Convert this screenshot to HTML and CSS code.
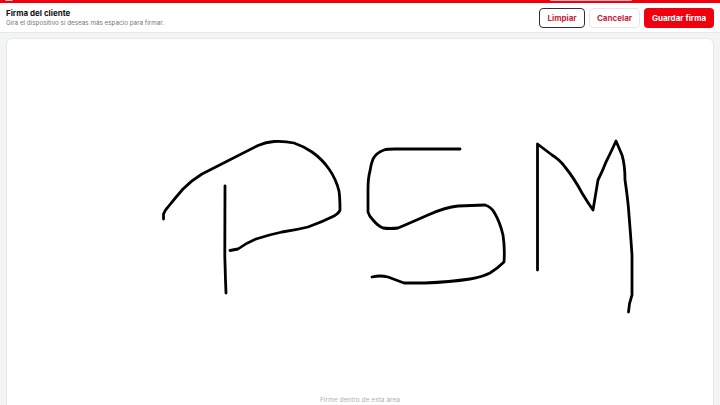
FILE: index.html
```html
<!DOCTYPE html>
<html lang="es">
<head>
  <meta charset="UTF-8">
  <meta name="viewport" content="width=device-width, initial-scale=1.0">
  <title>Firma del cliente</title>
  <link rel="stylesheet" href="styles.css">
</head>
<body>
  <div class="top-strip">
    <span class="strip-tab strip-tab-left"></span>
    <span class="strip-tab strip-tab-right"></span>
  </div>
  <header class="sign-header">
    <div class="sign-heading">
      <div class="sign-title">Firma del cliente</div>
      <div class="sign-hint">Gira el dispositivo si deseas más espacio para firmar.</div>
    </div>
    <div class="sign-actions">
      <button class="btn btn-clear">Limpiar</button>
      <button class="btn btn-cancel">Cancelar</button>
      <button class="btn btn-save">Guardar firma</button>
    </div>
  </header>
  <main class="sign-body">
    <div class="sign-pad">
      <svg class="sign-strokes" viewBox="0 0 708 367" aria-hidden="true">
        <g transform="translate(-6 -38)">
          <path d="M163.500 219 L163.500 214 Q165 210 168 207 Q176 197 183 189 Q192 180 202 174 L258 145.500 Q266 142 274 141.500 Q285 141 294 143 Q303 146 312 152 Q322 159 329 169 Q336 179 339 191 Q340 198 340 210 Q339 213 334 216 Q322 222 308 227 Q296 230 282 232 Q268 235 256 239 Q246 243 238 249 L230 250.500"/>
          <path d="M225 186 L224.800 256 L225.500 280 L226 293"/>
          <path d="M460 149 L395 149 Q387 149 384 150 Q376 153 373 159 Q371 164 370 171 Q368 178 368 190 L368 212 Q369 216 373 220 Q378 226 383 228 Q390 229 398 228 Q410 223 428 215 Q446 207 458 206 L485 205 Q491 207 494 212 Q500 222 503 235 Q505 248 504 262 Q498 268 490 273 Q482 277 470 279 Q450 282 425 283 L404 283 Q396 280 388 277 Q380 275 372 277"/>
          <path d="M537.500 270 L537.500 144 L552 155 Q560 160 565 167 Q574 178 582 193 Q588 203 593 210 L598 180 Q603 170 606 162 Q612 150 616 141 L622 155 Q625 165 625 180 Q628 200 629 215 Q631 240 632 255 L632 295 Q629 303 628.500 312"/>
        </g>
      </svg>
      <div class="sign-placeholder">Firme dentro de esta área</div>
    </div>
  </main>
</body>
</html>
```

FILE: styles.css
```css
html, body {
  height: 100%;
}

body {
  margin: 0;
  display: flex;
  flex-direction: column;
  height: 405px;
  overflow: hidden;
  background-color: #f3f4f6;
  color: #111;
  font-family: Inter, "Liberation Sans", sans-serif;
}

.top-strip {
  flex: 0 0 3px;
  display: flex;
  justify-content: space-between;
  align-items: flex-start;
  padding: 0 88px 0 5px;
  background-color: #f0000f;
}

.strip-tab {
  height: 1px;
  background-color: #f8b4b8;
  border-radius: 0 0 6px 6px;
}

.strip-tab-left {
  width: 8px;
}

.strip-tab-right {
  width: 82px;
}

.sign-header {
  flex: 0 0 30px;
  box-sizing: border-box;
  display: flex;
  align-items: center;
  justify-content: space-between;
  padding: 0 6px;
  background-color: #fff;
  border-bottom: 1px solid #e5e7eb;
}

.sign-title {
  font-size: 8px;
  font-weight: 700;
  line-height: 11px;
}

.sign-hint {
  font-size: 6.300px;
  line-height: 9px;
  color: #71757e;
}

.sign-actions {
  display: flex;
  gap: 4px;
}

.btn {
  height: 20px;
  padding: 0;
  border-radius: 4px;
  border: 1px solid #e5e7eb;
  background-color: #fff;
  color: #c8203c;
  font-family: inherit;
  font-size: 8px;
  font-weight: 700;
}

.btn-clear {
  width: 46px;
  border: 1.500px solid #2b2f36;
}

.btn-cancel {
  width: 51px;
}

.btn-save {
  width: 70px;
  border: none;
  background-color: #f0000f;
  color: #fff;
}

.sign-body {
  flex: 1;
  display: flex;
  padding: 5px 6px 0;
  min-height: 0;
}

.sign-pad {
  flex: 1;
  position: relative;
  background-color: #fff;
  border: 1px solid #e5e7eb;
  border-bottom: none;
  border-radius: 6px 6px 0 0;
}

.sign-strokes {
  position: absolute;
  top: -1px;
  left: -1px;
  width: 708px;
  height: 367px;
}

.sign-strokes path {
  fill: none;
  stroke: #000;
  stroke-width: 2.800;
  stroke-linejoin: round;
  stroke-linecap: round;
}

.sign-placeholder {
  position: absolute;
  left: 0;
  right: 0;
  bottom: 0;
  text-align: center;
  font-size: 6.600px;
  line-height: 9px;
  color: #adb1bb;
}
```
